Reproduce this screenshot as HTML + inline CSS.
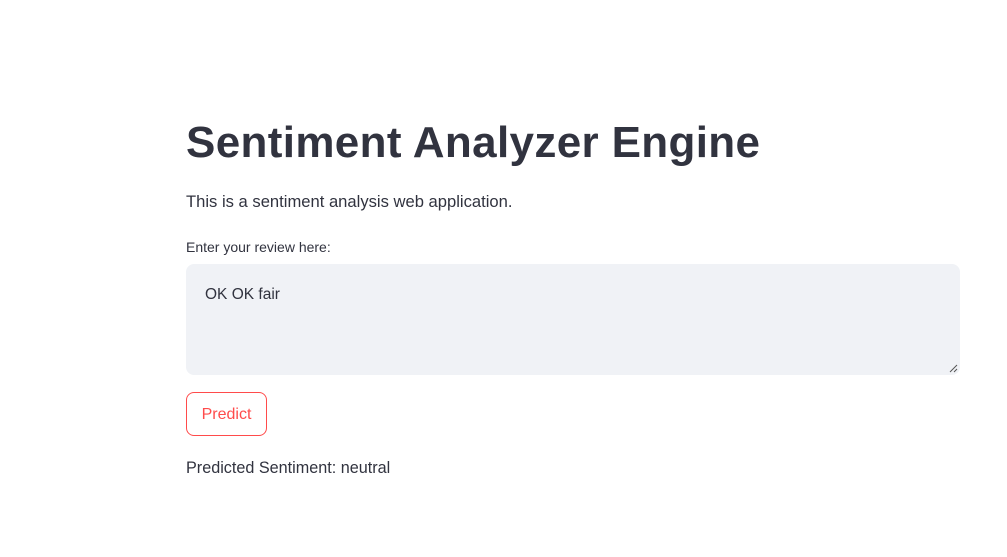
<!DOCTYPE html>
<html><head><meta charset="utf-8"><style>
body{margin:0;background:#fff;width:1007px;height:557px;overflow:hidden;font-family:"Liberation Sans",sans-serif;color:#31333f;position:relative}
.a{position:absolute;white-space:nowrap}
h1{position:absolute;left:186px;top:113px;margin:0;font-size:44px;font-weight:bold;letter-spacing:0.35px;line-height:60px}
.ta{position:absolute;left:186px;top:264px;width:774px;height:111px;background:#f0f2f6;border-radius:8px}
.btn{position:absolute;left:186px;top:392px;width:79px;height:42px;border:1px solid #ff4b4b;border-radius:8px;color:#ff4b4b;font-size:16px;text-align:center;line-height:43px}
</style></head><body>
<h1>Sentiment Analyzer Engine</h1>
<div class="a" style="left:186px;top:192px;font-size:16.6px">This is a sentiment analysis web application.</div>
<div class="a" style="left:186px;top:239px;font-size:14px">Enter your review here:</div>
<div class="ta"><div class="a" style="left:19px;top:22px;font-size:15.5px">OK OK fair</div>
<svg style="position:absolute;right:2px;bottom:2px" width="9" height="9"><path d="M8 1L1 8M8 5L5 8" stroke="#555" stroke-width="1"/></svg></div>
<div class="btn">Predict</div>
<div class="a" style="left:186px;top:459px;font-size:16.2px">Predicted Sentiment: neutral</div>
</body></html>
